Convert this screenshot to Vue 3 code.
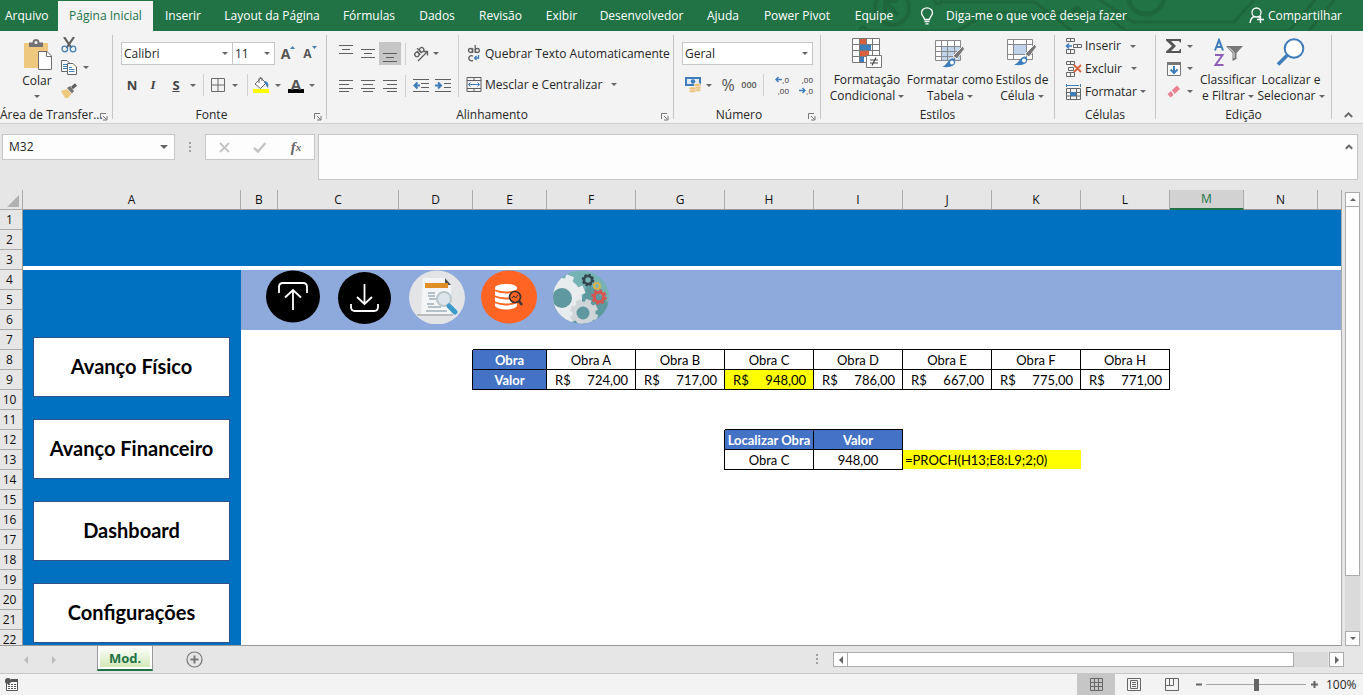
<script setup>
import { ref } from 'vue'

const tabs = ['Arquivo', 'Página Inicial', 'Inserir', 'Layout da Página', 'Fórmulas', 'Dados', 'Revisão', 'Exibir', 'Desenvolvedor', 'Ajuda', 'Power Pivot', 'Equipe']
const activeTab = ref('Página Inicial')
const zoom = ref(50)
const formula = ref('')
const nameBox = ref('M32')

const columns = ['A', 'B', 'C', 'D', 'E', 'F', 'G', 'H', 'I', 'J', 'K', 'L', 'M', 'N', '']
const rows = Array.from({ length: 22 }, (_, i) => i + 1)

const cells = {
  E8: { text: 'Obra', kind: 'head' },
  E9: { text: 'Valor', kind: 'head' },
  H12: { text: 'Localizar Obra', kind: 'head' },
  I12: { text: 'Valor', kind: 'head' },
  H13: { text: 'Obra C' },
  I13: { text: '948,00' },
  J13: { text: '=PROCH(H13;E8:L9;2;0)', kind: 'note', span: 2 },
}
const works = [['F', 'Obra A', '724,00'], ['G', 'Obra B', '717,00'], ['H', 'Obra C', '948,00'], ['I', 'Obra D', '786,00'], ['J', 'Obra E', '667,00'], ['K', 'Obra F', '775,00'], ['L', 'Obra H', '771,00']]
for (const [col, name, value] of works) {
  cells[col + 8] = { text: name }
  cells[col + 9] = { money: value, kind: col === 'H' ? 'found' : '' }
}

const ranges = [{ c0: 4, c1: 11, r0: 8, r1: 9 }, { c0: 7, c1: 8, r0: 12, r1: 13 }]
const boxed = (c, r) => ranges.some(g => c >= g.c0 && c <= g.c1 && r >= g.r0 && r <= g.r1)

function rowCells(r) {
  const out = []
  for (let c = 0; c < columns.length; c++) {
    const data = cells[columns[c] + r] || {}
    const cls = [data.kind]
    if (boxed(c, r) || boxed(c + 1, r)) cls.push('line-right')
    if (boxed(c, r) || boxed(c, r + 1)) cls.push('line-bottom')
    if (r <= 3 || c === 0) cls.push('blue')
    else if (r <= 6) cls.push('band')
    if (r === 3) cls.push('ruled')
    out.push({ ...data, id: columns[c] + r, cls })
    if (data.span) c += data.span - 1
  }
  return out
}

const shapes = ['Avanço Físico', 'Avanço Financeiro', 'Dashboard', 'Configurações']

const teeth = [0, 45, 90, 135, 180, 225, 270, 315]
const topLines = ['M0 1.5H14M3 5.5H11M0 9.5H14', 'M0 1.5H14M3 5.5H11M0 9.5H14', 'M0 1.5H14M3 5.5H11M0 9.5H14']
const alignLines = ['M0 1.5H14M0 5.5H10M0 9.5H14M0 12.5H10', 'M0 1.5H14M2 5.5H12M0 9.5H14M2 12.5H12', 'M0 1.5H14M4 5.5H14M0 9.5H14M4 12.5H14']
</script>

<template>
  <div class="app">
    <header class="titlebar">
      <svg class="art" width="583" height="31" viewBox="0 0 583 31" fill="none" stroke="#1e673d" stroke-width="3">
        <circle cx="112" cy="8" r="17" stroke-width="4" />
        <path d="M105 14V1H118M105 1L118 15" stroke-width="4" />
        <circle cx="83" cy="30" r="3" /><path d="M86 30.500H178L208 13H323L346 31H509L535 0" />
        <circle cx="158" cy="1" r="3" /><path d="M161 2H255L292 31" />
        <path d="M320 0L353 22H454L474 0" />
        <circle cx="297" cy="10" r="3" fill="#1e673d" />
        <circle cx="366" cy="-4" r="18" stroke-width="5" />
        <path d="M529 31L554 0" />
      </svg>
      <nav class="tabs">
        <button v-for="t in tabs" :key="t" :class="{ active: t === activeTab }" @click="activeTab = t">{{ t }}</button>
      </nav>
      <label class="tellme">
        <svg width="14" height="18" viewBox="0 0 14 18" fill="none" stroke="#fff" stroke-width="1.3"><path d="M4.5 12.5C4.500 10 1.500 9 1.500 5.800A5.500 5 0 0 1 12.500 5.800C12.500 9 9.500 10 9.500 12.500ZM4.500 14.500H9.500M5.500 16.800H8.500" /></svg>
        <input placeholder="Diga-me o que você deseja fazer">
      </label>
      <button class="share">
        <svg width="16" height="17" viewBox="0 0 16 17" fill="none" stroke="#fff" stroke-width="1.3"><circle cx="7.500" cy="5.500" r="4.500" /><path d="M1 16C1.500 12 3.500 10 5.500 9.500M9 9.500L11 11M11.500 9V16M8 12.500H15" /></svg>
        Compartilhar
      </button>
    </header>

    <section class="ribbon">
      <div class="group">
        <div class="body clip">
          <button class="big">
            <svg width="30" height="32" viewBox="-1 -1 30 32"><path d="M1 4H25V29H1Z" fill="#edc87e" /><path d="M6 3.500H9.500A3.500 3.500 0 0 1 16.500 3.500H20V8H6Z" fill="#737373" /><circle cx="13" cy="3.500" r="1.500" fill="#f3f3f3" /><path d="M15.500 12.500H24L28.500 17V30.500H15.500Z" fill="#fff" stroke="#6d6d6d" /><path d="M23.500 12.500V17.500H28.500" fill="none" stroke="#6d6d6d" /></svg>
            <span>Colar</span><i class="caret"></i>
          </button>
          <div class="stack">
            <button aria-label="Recortar"><svg width="16" height="16" viewBox="0 0 16 16" fill="none"><path d="M3 0L10.500 11M13 0L5.500 11" stroke="#5f5f5f" stroke-width="2.200" /><circle cx="3.800" cy="12" r="2.800" stroke="#4680b8" stroke-width="1.300" /><circle cx="12" cy="12" r="2.800" stroke="#4680b8" stroke-width="1.300" /></svg></button>
            <button aria-label="Copiar"><svg width="16" height="16" viewBox="0 0 16 16" fill="#fff" stroke="#666"><path d="M.5 1.500H6L8.500 4V12.500H.5Z" /><path d="M2 5.500H6M2 7.500H6M2 9.500H6" stroke="#4680b8" /><path d="M6.500 4.500H12L15.500 8V15.500H6.500Z" /><path d="M8 8.500H11M8 10.500H13.500M8 12.500H13.500" stroke="#4680b8" /></svg><i class="caret"></i></button>
            <button aria-label="Pincel de Formatação"><svg width="17" height="16" viewBox="0 0 17 16"><path d="M0 8L6 6L10.500 11L7 15H4Z" fill="#edc87e" /><path d="M6 5L9 3L13 8L11 10.500Z" fill="#737373" /><path d="M11 5L15 1.500" stroke="#5f5f5f" stroke-width="3" /></svg></button>
          </div>
        </div>
        <div class="label start">Área de Transfer...<svg class="launch" viewBox="0 0 8 8"><path d="M.5 6V.5H6M3 3L6.500 6.500M7 3V7H3" /></svg></div>
      </div>

      <div class="group">
        <div class="body two">
          <div class="row">
            <div class="pick font"><select aria-label="Fonte"><option>Calibri</option></select><i class="caret"></i></div>
            <div class="pick size"><select aria-label="Tamanho"><option>11</option></select><i class="caret"></i></div>
            <button class="grow" aria-label="Aumentar fonte"><b>A</b><svg width="5" height="3" viewBox="0 0 5 3"><path d="M0 3L2.500 0L5 3Z" fill="#4680b8" /></svg></button>
            <button class="grow small" aria-label="Diminuir fonte"><b>A</b><svg width="5" height="3" viewBox="0 0 5 3"><path d="M0 0L2.500 3L5 0Z" fill="#4680b8" /></svg></button>
          </div>
          <div class="row fmt">
            <button><b>N</b></button>
            <button><b class="it">I</b></button>
            <button><b class="un">S</b></button>
            <i class="caret"></i>
            <hr>
            <button aria-label="Bordas"><svg width="14" height="14" viewBox="0 0 14 14" fill="none" stroke="#6a6a6a"><path d="M.5 .5H13.500V13.500H.5ZM7 .5V13.500M.5 7H13.500" /></svg></button>
            <i class="caret"></i>
            <hr>
            <button aria-label="Cor de preenchimento"><svg width="17" height="16" viewBox="0 0 17 16"><path d="M2 7L8 1L13 6L7.500 11.500Z" fill="#fff" stroke="#666" /><path d="M6 6V1.500A1.700 1.700 0 0 1 9 1.500V4" fill="none" stroke="#666" /><path d="M12 4C15 5 16 7 15 11C13 9 13 7 10.500 5Z" fill="#4680b8" /><path d="M0 12H16V16H0Z" fill="#ff0" /></svg></button>
            <i class="caret"></i>
            <button class="color" aria-label="Cor da fonte"><b>A</b></button>
            <i class="caret"></i>
          </div>
        </div>
        <div class="label side">Fonte<svg class="launch" viewBox="0 0 8 8"><path d="M.5 6V.5H6M3 3L6.500 6.500M7 3V7H3" /></svg></div>
      </div>

      <div class="group">
        <div class="body align">
          <div class="two">
            <div class="row al">
              <button v-for="(d, i) in topLines" :key="i" :class="['v' + i, { on: i === 2 }]" :aria-label="'Alinhamento vertical ' + i"><svg width="14" height="11" viewBox="0 0 14 11" stroke="#5f5f5f"><path :d="d" /></svg></button>
              <hr>
              <button aria-label="Orientação"><svg width="18" height="17" viewBox="0 0 18 17" fill="none" stroke="#5f5f5f" stroke-width="1.300"><path d="M6 16L15 7M11.500 6.500H15.500V10.500" /><g transform="rotate(-45 6 7)"><circle cx="3.500" cy="8" r="2.200" /><path d="M5.800 5.500V10.500M8 3.500V10.500" /><circle cx="10.200" cy="8" r="2.200" /></g></svg></button>
              <i class="caret"></i>
            </div>
            <div class="row al">
              <button v-for="(d, i) in alignLines" :key="i" :aria-label="'Alinhamento horizontal ' + i"><svg width="14" height="13" viewBox="0 0 14 13" stroke="#5f5f5f"><path :d="d" /></svg></button>
              <hr>
              <button aria-label="Diminuir recuo"><svg width="16" height="14" viewBox="0 0 16 14" fill="none" stroke="#5f5f5f"><path d="M0 .5H16M8 4.500H16M8 8.500H16M0 12.500H16" /><path d="M7 6.500H2M4.500 3.500L1.500 6.500L4.500 9.500" stroke="#3f7cba" stroke-width="2" /></svg></button>
              <button aria-label="Aumentar recuo"><svg width="16" height="14" viewBox="0 0 16 14" fill="none" stroke="#5f5f5f"><path d="M0 .5H16M9 4.500H16M9 8.500H16M0 12.500H16" /><path d="M0 6.500H5M3 3.500L6 6.500L3 9.500" stroke="#3f7cba" stroke-width="2" /></svg></button>
            </div>
          </div>
          <div class="two wide">
            <button class="row cmd"><svg width="16" height="17" viewBox="0 0 16 17" fill="none" stroke="#5f5f5f" stroke-width="1.300"><circle cx="4.500" cy="5.500" r="2" /><path d="M6.700 3.200V8M9.200 0V8M7 11.300A2.500 2.500 0 1 0 7 15.200" /><circle cx="11.300" cy="5.500" r="2" /><path d="M12.500 10V13H8.500M10.500 11L8.500 13L10.500 15" stroke="#3f7cba" /></svg>Quebrar Texto Automaticamente</button>
            <button class="row cmd"><svg width="15" height="15" viewBox="0 0 15 15" fill="none" stroke="#5f5f5f"><path d="M.5 .5H14.500V14.500H.5ZM.5 3.500H14.500M.5 11.500H14.500M7.500 .5V3.500M7.500 11.500V14.500" /><path d="M2 7.500H13M4 5.500L2 7.500L4 9.500M11 5.500L13 7.500L11 9.500" stroke="#3f7cba" /></svg>Mesclar e Centralizar<i class="caret far"></i></button>
          </div>
        </div>
        <div class="label side">Alinhamento<svg class="launch" viewBox="0 0 8 8"><path d="M.5 6V.5H6M3 3L6.500 6.500M7 3V7H3" /></svg></div>
      </div>

      <div class="group">
        <div class="body two">
          <div class="row"><div class="pick num"><select aria-label="Formato de número"><option>Geral</option></select><i class="caret"></i></div></div>
          <div class="row numfmt">
            <button aria-label="Formato de contabilização"><svg width="17" height="16" viewBox="0 0 17 16"><path d="M0 0H16V9H0Z" fill="#3f7cba" /><path d="M2 2H14V7H2Z" fill="#e4edf6" /><circle cx="8" cy="4.500" r="2.200" fill="#3f7cba" /><g fill="#edc27a" stroke="#f3f3f3" stroke-width=".6"><ellipse cx="12.500" cy="13" rx="3.500" ry="1.700" /><ellipse cx="12.500" cy="10.500" rx="3.500" ry="1.700" /><ellipse cx="12.500" cy="8" rx="3.500" ry="1.700" /><ellipse cx="7.500" cy="14" rx="3.500" ry="1.700" /><ellipse cx="7.500" cy="11.500" rx="3.500" ry="1.700" /></g></svg></button>
            <i class="caret"></i>
            <button class="pct">%</button>
            <button class="tiny">000</button>
            <hr>
            <button class="dec" aria-label="Aumentar casas decimais"><span><svg width="7" height="7" viewBox="0 0 7 7" fill="none" stroke="#3f7cba" stroke-width="1.400"><path d="M7 3.500H1M3.500 1L1 3.500L3.500 6" /></svg>,0</span><span>,00</span></button>
            <button class="dec" aria-label="Diminuir casas decimais"><span>,00</span><span><svg width="7" height="7" viewBox="0 0 7 7" fill="none" stroke="#3f7cba" stroke-width="1.400"><path d="M0 3.500H6M3.500 1L6 3.500L3.500 6" /></svg>,0</span></button>
          </div>
        </div>
        <div class="label side">Número<svg class="launch" viewBox="0 0 8 8"><path d="M.5 6V.5H6M3 3L6.500 6.500M7 3V7H3" /></svg></div>
      </div>

      <div class="group">
        <div class="body styles">
          <button class="big">
            <svg width="30" height="31" viewBox="0 0 30 31"><path d="M.5 .5H27.500V24.500H.5Z" fill="#fff" /><path d="M8 1H14V6H8ZM8 13H17V18H8Z" fill="#d9603f" /><path d="M8 7H19V12H8ZM8 19H12V24H8Z" fill="#3f7cba" /><path d="M.5 .5H27.500V24.500H.5ZM.5 6.500H27.500M.5 12.500H27.500M.5 18.500H27.500M7.500 .5V24.500M14.500 .5V6M20.500 .5V18" fill="none" stroke="#777" /><path d="M14.500 17.500H29.500V29.500H14.500Z" fill="#fff" stroke="#777" /><path d="M18 22H26M18 25H26M24 19.500L20 27.500" stroke="#444" stroke-width="1.200" /></svg>
            <span>Formatação</span><span>Condicional<i class="caret"></i></span>
          </button>
          <button class="big">
            <svg width="30" height="31" viewBox="0 0 30 31"><path d="M.5 3.500H25.500V22.500H.5Z" fill="#fff" /><path d="M7 9H25V22H7Z" fill="#bfd3ea" /><path d="M.5 2.500H25.500V22.500H.5ZM.5 8.500H25.500M.5 13.500H25.500M.5 18.500H25.500M6.500 2.500V22.500M12.500 2.500V22.500M19.500 2.500V22.500" fill="none" stroke="#888" /><path d="M28 8L29.500 11L22 21L18 18Z" fill="#777" stroke="#f3f3f3" /><path d="M16 21C19 19 22 23 19 27C15 30 10 29 7 29C12 27 12 23 16 21Z" fill="#3f7cba" /><circle cx="17" cy="24.500" r="2" fill="#fff" /></svg>
            <span>Formatar como</span><span>Tabela<i class="caret"></i></span>
          </button>
          <button class="big">
            <svg width="30" height="31" viewBox="0 0 30 31"><path d="M.5 1.500H25.500V21.500H.5Z" fill="#fff" /><path d="M6 7H20V17H6Z" fill="#bfd3ea" /><path d="M.5 1.500H25.500V21.500H.5ZM.5 6.500H25.500M.5 16.500H25.500M6.500 1.500V21.500M19.500 1.500V21.500" fill="none" stroke="#888" /><path d="M28 6L29.500 9L22 19L18 16Z" fill="#777" stroke="#f3f3f3" /><path d="M16 19C19 17 22 21 19 25C15 28 10 27 7 27C12 25 12 21 16 19Z" fill="#3f7cba" /><circle cx="17" cy="22.500" r="2" fill="#fff" /></svg>
            <span>Estilos de</span><span>Célula<i class="caret"></i></span>
          </button>
        </div>
        <div class="label">Estilos</div>
      </div>

      <div class="group">
        <div class="body list">
          <button><svg width="17" height="16" viewBox="0 0 17 16" fill="none" stroke="#666"><path d="M1.500 .5H9.500V3.500H1.500ZM5.500 .5V3.500M1.500 11.500H9.500V15.500H1.500ZM5.500 11.500V15.500M8.500 6.500H16.500V9.500H8.500ZM12.500 6.500V9.500" /><path d="M7 8H2M4 5.500L1.500 8L4 10.500" stroke="#3f7cba" stroke-width="1.600" /></svg>Inserir<i class="caret"></i></button>
          <button><svg width="17" height="16" viewBox="0 0 17 16" fill="none" stroke="#666"><path d="M1.500 .5H9.500V3.500H1.500ZM5.500 .5V3.500M1.500 11.500H9.500V15.500H1.500ZM5.500 11.500V15.500M3.500 6.500H8.500V9.500H3.500Z" /><path d="M9 4L16 11M16 4L9 11" stroke="#d9603f" stroke-width="1.800" /></svg>Excluir<i class="caret"></i></button>
          <button><svg width="17" height="16" viewBox="0 0 17 16" fill="none" stroke="#666"><path d="M1.500 4.500H15.500V15.500H1.500ZM1.500 8.500H15.500M1.500 12H15.500M5.500 4.500V15.500M11.500 4.500V15.500" /><path d="M5 8H11V12H5Z" fill="#3f7cba" stroke="none" /><path d="M1.500 0V3M15.500 0V3M2 1.500H14" stroke="#3f7cba" /></svg>Formatar<i class="caret near"></i></button>
        </div>
        <div class="label">Células</div>
      </div>

      <div class="group">
        <div class="body edit">
          <div class="list">
            <button aria-label="AutoSoma"><svg width="16" height="16" viewBox="0 0 16 16"><path d="M0 1H15V4.500H14L13 3H5L10 8L5 13H13L14 11H15V15H0V13.500L6 8L0 2.500Z" fill="#555" /></svg><i class="caret"></i></button>
            <button aria-label="Preencher"><svg width="16" height="16" viewBox="0 0 16 16"><path d="M1.500 1.500H14.500V14.500H1.500Z" fill="#fff" stroke="#777" /><path d="M1 1H15V4H1Z" fill="#777" /><path d="M8 5V12M4.500 8.500L8 12L11.500 8.500" fill="none" stroke="#3f7cba" stroke-width="2" /></svg><i class="caret"></i></button>
            <button aria-label="Limpar"><svg width="16" height="16" viewBox="0 0 16 16"><path d="M6 6L11 1.500L14 5L8.500 10Z" fill="#ea8090" /><path d="M5 7L7.500 11L4.500 13.500L1.500 10Z" fill="#ea8090" /></svg><i class="caret"></i></button>
          </div>
          <button class="big">
            <svg width="31" height="31" viewBox="0 0 31 31" fill="none"><path d="M2 12.500L6 2L10 12.500M3.500 9H8.500" stroke="#3f7cba" stroke-width="2" /><path d="M2 17H9.500L2.500 27H10.500" stroke="#8d5fb4" stroke-width="2" /><path d="M13 8H30L23.500 15V21L19.500 23V15Z" fill="#777" /><path d="M16 9.500L21 14.500V20" stroke="#f3f3f3" /></svg>
            <span>Classificar</span><span>e Filtrar<i class="caret"></i></span>
          </button>
          <button class="big">
            <svg width="31" height="31" viewBox="0 0 31 31" fill="none" stroke="#3f7cba"><circle cx="18" cy="10.500" r="9.300" fill="#fff" stroke-width="2" /><path d="M11 17.500L2 26.500" stroke-width="3.600" /></svg>
            <span>Localizar e</span><span>Selecionar<i class="caret"></i></span>
          </button>
        </div>
        <div class="label">Edição</div>
      </div>
      <button class="collapse" aria-label="Recolher"><svg width="9" height="6" viewBox="0 0 9 6" fill="none" stroke="#666" stroke-width="1.800"><path d="M.8 5L4.500 1.300L8.200 5" /></svg></button>
    </section>

    <section class="formulabar">
      <label class="namebox"><input v-model="nameBox" aria-label="Caixa de nome"><i class="caret"></i></label>
      <svg class="dots" width="3" height="12" viewBox="0 0 3 12" fill="#a0a0a0"><path d="M0 0H2V2H0ZM0 4H2V6H0ZM0 8H2V10H0Z" /></svg>
      <div class="fx">
        <button aria-label="Cancelar"><svg width="11" height="11" viewBox="0 0 11 11" stroke="#c4c4c4" stroke-width="1.800"><path d="M1 1L10 10M10 1L1 10" /></svg></button>
        <button aria-label="Inserir"><svg width="14" height="11" viewBox="0 0 14 11" fill="none" stroke="#c4c4c4" stroke-width="2.400"><path d="M1 6L5 9.500L12.500 1" /></svg></button>
        <button class="fn">f<small>x</small></button>
      </div>
      <label class="formula"><textarea v-model="formula" aria-label="Barra de fórmulas"></textarea><svg width="8" height="6" viewBox="0 0 8 6" fill="none" stroke="#666" stroke-width="2"><path d="M.8 4.800L4 1.600L7.200 4.800" /></svg></label>
    </section>

    <main class="work">
      <div class="sheet">
        <table>
          <colgroup>
            <col class="c-row"><col v-for="c in columns" :key="c" :class="'c-' + c">
          </colgroup>
          <thead>
            <tr>
              <th class="corner"><svg width="12" height="12" viewBox="0 0 12 12"><path d="M12 0V12H0Z" fill="#b1b1b1" /></svg></th>
              <th v-for="c in columns" :key="c" :class="{ sel: c === 'M', last: !c }">{{ c }}</th>
            </tr>
          </thead>
          <tbody>
            <tr v-for="r in rows" :key="r">
              <th>{{ r }}</th>
              <td v-for="cell in rowCells(r)" :key="cell.id" :class="cell.cls" :colspan="cell.span">
                <div v-if="cell.money" class="money"><span>R$</span><span>{{ cell.money }}</span></div>
                <template v-else>{{ cell.text }}</template>
              </td>
            </tr>
          </tbody>
        </table>

        <div class="shapes"><button v-for="s in shapes" :key="s">{{ s }}</button></div>

        <div class="icons">
          <svg viewBox="0 0 56 54"><ellipse cx="28" cy="26.500" rx="27" ry="26" /><path d="M14 23V17Q14 13 18 13H38Q42 13 42 17V23M28 40V20M20 27.500L28 20L36 27.500" fill="none" stroke="#fff" stroke-width="1.800" /></svg>
          <svg viewBox="0 0 56 54"><ellipse cx="27.500" cy="28" rx="26.500" ry="26" /><path d="M14 34V37Q14 41 18 41H37Q41 41 41 37V34M27.500 14V34M20 27L27.500 34L35 27" fill="none" stroke="#fff" stroke-width="1.800" /></svg>
          <svg viewBox="0 0 56 54"><ellipse cx="28" cy="27.500" rx="28" ry="27" fill="#e3e4e6" /><path d="M8 44H44V46H8Z" fill="#bbb" /><path d="M14 8H36L42 14V44H12Z" fill="#f4f5f6" /><path d="M36 8L42 15H36Z" fill="#4d4d55" /><path d="M16 13H39V18H16Z" fill="#e08e25" /><path d="M19 23H26M19 26H26M20 29H31M18 34H25M19 37H32M17 41H38" stroke="#9fb0bb" stroke-width="1.500" /><circle cx="35" cy="29" r="7" fill="#dce6eb" stroke="#bac6cc" stroke-width="2" /><path d="M40 36L46 42" stroke="#3a9bcb" stroke-width="5" stroke-linecap="round" /></svg>
          <svg viewBox="0 0 56 54"><ellipse cx="28" cy="27" rx="28" ry="26.500" fill="#ff6422" /><path d="M14 17.500A11 3.500 0 0 1 36 17.500V35.500A11 4 0 0 1 14 35.500Z" fill="#fff" /><path d="M13 20Q25 25 37 20M13 26Q25 31 37 26M13 32Q25 37 37 32" fill="none" stroke="#ff6422" stroke-width="1.800" /><circle cx="34" cy="27" r="5.500" fill="#ff6422" stroke="#3c3430" stroke-width="1.700" /><path d="M38 31L41 35" stroke="#3c3430" stroke-width="2.500" /><path d="M31 28L33 26L34.500 28L37 25" fill="none" stroke="#3c3430" /></svg>
          <svg viewBox="0 0 56 54">
            <clipPath id="gearclip"><ellipse cx="28" cy="27" rx="28" ry="26.500" /></clipPath>
            <g clip-path="url(#gearclip)">
              <path d="M0 0H56V54H0Z" fill="#76b3b5" /><path d="M35 12L56 34V54H20Z" fill="#5d999f" />
              <g fill="#e9ecee"><circle cx="8" cy="29" r="21" /><rect v-for="a in teeth" :key="a" x="4" y="4" width="8" height="8" :transform="`rotate(${a + 22} 8 29)`" /></g>
              <circle cx="9" cy="28" r="10" fill="#5f999f" />
              <g fill="#cfd5d9"><circle cx="31" cy="43" r="11.500" /><rect v-for="a in teeth" :key="a" x="28" y="29" width="6" height="6" :transform="`rotate(${a + 20} 31 43)`" /></g>
              <circle cx="30" cy="43" r="6.500" fill="#5f999f" />
              <g stroke="#33444e" fill="none"><circle cx="35" cy="10" r="4" stroke-width="2.500" /><circle cx="35" cy="10" r="5.500" stroke-dasharray="2.300 2" stroke-width="1.600" /></g>
              <g stroke="#e2b340" fill="none"><circle cx="44" cy="16" r="2.700" stroke-width="1.600" /><circle cx="44" cy="16" r="3.800" stroke-dasharray="1.500 1.500" /></g>
              <g stroke="#d9534f" fill="none"><circle cx="46" cy="27" r="4.700" stroke-width="3" /><circle cx="46" cy="27" r="7" stroke-dasharray="3 2.500" stroke-width="1.600" /></g>
            </g>
          </svg>
        </div>
      </div>
      <div class="vscroll">
        <button aria-label="Rolar para cima"><i class="caret up"></i></button>
        <div class="track"><div class="thumb"></div></div>
        <button aria-label="Rolar para baixo"><i class="caret"></i></button>
      </div>
    </main>

    <section class="sheetbar">
      <div class="navs"><i class="tri left"></i><i class="tri right"></i></div>
      <button class="sheettab"><span>Mod.</span></button>
      <button class="add" aria-label="Nova planilha"><svg width="17" height="17" viewBox="0 0 17 17" fill="none" stroke="#777"><circle cx="8.500" cy="8.500" r="7.500" stroke-width="1.200" /><path d="M8.500 4.500V12.500M4.500 8.500H12.500" stroke-width="2" /></svg></button>
      <svg class="dots" width="3" height="12" viewBox="0 0 3 12" fill="#a0a0a0"><path d="M0 0H2V2H0ZM0 4H2V6H0ZM0 8H2V10H0Z" /></svg>
      <div class="hscroll">
        <button aria-label="Rolar para a esquerda"><i class="tri left dark"></i></button>
        <div class="track"><div class="thumb"></div></div>
        <button aria-label="Rolar para a direita"><i class="tri right dark"></i></button>
      </div>
    </section>

    <footer class="status">
      <button class="rec" aria-label="Gravar macro"><svg width="14" height="14" viewBox="0 0 14 14"><path d="M1.500 5V12.500H12.500V1.500H6" fill="#fff" stroke="#555" /><path d="M6 1H13V4H6Z" fill="#555" /><circle cx="3" cy="3" r="3" fill="#555" /><path d="M3 6.500H11M3 8.500H11M3 10.500H11" stroke="#555" stroke-dasharray="2 1" /></svg></button>
      <button class="view on" aria-label="Normal"><svg width="13" height="13" viewBox="0 0 13 13" fill="none" stroke="#666"><path d="M.5 .5H12.500V12.500H.5ZM4.500 .5V12.500M8.500 .5V12.500M.5 4.500H12.500M.5 8.500H12.500" /></svg></button>
      <button class="view" aria-label="Layout da Página"><svg width="14" height="13" viewBox="0 0 14 13" fill="none" stroke="#666"><path d="M.5 .5H13.500V12.500H.5ZM3.500 2.500H10.500V10.500H3.500ZM5 4.500H9M5 6.500H9M5 8.500H9" /></svg></button>
      <button class="view" aria-label="Quebra de página"><svg width="14" height="13" viewBox="0 0 14 13" fill="none" stroke="#666"><path d="M.5 .5H13.500V12.500H.5ZM.5 7.500H8.500V.5M4.500 .5V7.500" /></svg></button>
      <button class="zoombtn" aria-label="Reduzir"><svg width="7" height="7" viewBox="0 0 7 7"><path d="M0 2.500H6V4.500H0Z" fill="#666" /></svg></button>
      <input v-model="zoom" type="range" min="0" max="100" aria-label="Zoom">
      <button class="zoombtn" aria-label="Ampliar"><svg width="7" height="7" viewBox="0 0 7 7"><path d="M0 2.500H2.500V0H4.500V2.500H7V4.500H4.500V7H2.500V4.500H0Z" fill="#666" /></svg></button>
      <span class="pctval">100%</span>
    </footer>
  </div>
</template>

<style>
body { background: #e6e6e6; }
</style>

<style scoped>
* { box-sizing: border-box; }
.app { height: 100vh; min-height: 420px; display: flex; flex-direction: column; overflow: hidden; background: #e6e6e6; color: #262626; font: 12px/16px "Open Sans", "Noto Sans", sans-serif; }
button, input, select, textarea { font: inherit; color: inherit; margin: 0; padding: 0; border: 0; background: none; border-radius: 0; outline: 0; }
button { display: flex; align-items: center; justify-content: center; white-space: nowrap; }
svg { display: block; flex: none; }
hr { width: 1px; height: 22px; margin: 0 auto; border: 0; background: #d0d0d0; }
.caret { display: inline-block; flex: none; width: 6px; height: 3px; border: 3px solid transparent; border-top-color: #666; border-bottom: 0; place-self: center; }
.caret.up { border-top: 0; border-bottom: 3px solid #666; }

.titlebar { position: relative; display: flex; height: 31px; flex: none; background: #217346; color: #fff; }
.art { position: absolute; right: 0; top: 0; }
.tabs { position: relative; display: grid; grid-template-columns: 58px 95px 60px 118px 76px 60px 67px 55px 105px 58px 90px 64px; padding-top: 1px; }
.tabs button:first-child { justify-content: flex-start; padding-left: 5px; }
.tabs .active { background: #f3f3f3; color: #217346; }
.tellme { position: relative; flex: 1; display: flex; align-items: center; gap: 12px; padding-left: 14px; }
.tellme input { flex: 1; }
.tellme input::placeholder { color: #fff; opacity: 1; }
.share { position: relative; gap: 3px; padding-right: 21px; }

.ribbon { flex: none; display: grid; grid-template-columns: 113px 214px 347px 147px 234px 101px 176px 1fr; padding: 4px 0; background: #f3f3f3; border-bottom: 1px solid #d0d0d0; }
.group { border-right: 1px solid #c4c4c4; min-width: 0; }
.body { height: 72px; }
.label { position: relative; height: 12px; line-height: 16px; text-align: center; white-space: nowrap; }
.label.start { text-align: left; }
.label.side { padding-right: 16px; }
.launch { position: absolute; right: 4px; top: 6px; width: 8px; height: 8px; fill: none; stroke: #777; }
.clip { display: grid; grid-template-columns: 60px 1fr; padding-left: 7px; }
.big { flex-direction: column; justify-content: flex-start; padding-top: 3px; }
.big svg { margin-bottom: 3px; }
.big .caret { margin-left: 3px; vertical-align: middle; }
.clip .big .caret { margin: 6px 0 0; }
.stack { display: grid; grid-template-rows: 20px 24px 23px; margin-left: -6px; }
.stack button { justify-content: flex-start; gap: 6px; }
.two { display: grid; grid-template-rows: 23px 21px; row-gap: 9px; padding: 7px 7px 0 8px; align-content: start; }
.row { display: flex; align-items: center; }
.pick { display: grid; height: 23px; background: #fff; border: 1px solid #c6c6c6; }
.pick > * { grid-area: 1 / 1; }
.pick select { appearance: none; padding-left: 2px; width: 100%; }
.pick .caret { justify-self: end; margin-right: 4px; pointer-events: none; }
.font { width: 112px; }
.size { width: 43px; margin-left: -1px; }
.num { flex: 1; }
.grow { width: 22px; align-items: flex-start; color: #555; }
.grow b { font-size: 14px; line-height: 23px; }
.grow.small b { font-size: 12px; }
.grow svg { margin-top: 4px; }
.size + .grow { margin-left: 2px; }
.fmt { display: grid; grid-template-columns: 22px 20px 26px 7px 14px 16px 18px 6px 22px 12px 24px 8px; }
.fmt b { font-size: 13px; color: #444; }
.it { font-family: "Liberation Serif", serif; font-style: italic; }
.un { text-decoration: underline; }
.fmt .color b { width: 16px; height: 16px; line-height: 14px; font-size: 15px; text-align: center; border-bottom: 4px solid #000; color: #555; }
.align { display: grid; grid-template-columns: 131px 1fr; }
.align .two { padding-right: 0; }
.al { display: grid; grid-template-columns: 22px 22px 22px 8px 24px 20px; }
.al button { height: 23px; }
.al .caret { justify-self: start; }
.v0 { padding-bottom: 8px; }
.v2 { padding-top: 8px; }
.on { background: #c6c6c6; }
.align .wide { padding-left: 7px; border-left: 1px solid #d0d0d0; height: 62px; }
.cmd { justify-content: flex-start; }
.cmd svg { width: 16px; margin-right: 3px; }
.far { margin-left: 9px; }
.numfmt { display: grid; grid-template-columns: 22px 10px 28px 14px 15px 18px 24px; }
.pct { font-size: 16px; color: #555; }
.tiny { font-size: 9px; font-weight: 600; color: #555; }
.dec { flex-direction: column; align-items: flex-end; font-size: 8px; line-height: 11px; color: #333; }
.dec span { display: flex; align-items: center; }
.styles { display: grid; grid-template-columns: 82px 84px 60px; padding-left: 5px; }
.list { display: grid; grid-template-rows: 22px 23px 23px; align-content: start; }
.list button { justify-content: flex-start; padding-left: 10px; gap: 3px; }
.list .caret { margin-left: 6px; }
.list .near { margin-left: 0; }
.edit { display: grid; grid-template-columns: 42px 60px 66px; }
.edit .list .caret { margin-left: 2px; }
.collapse { align-self: end; padding: 0 0 1px 12px; justify-content: flex-start; }

.formulabar { flex: none; display: flex; align-items: flex-start; padding: 10px 5px 10px 2px; height: 66px; }
.namebox, .fx, .formula { display: flex; align-items: center; background: #fdfdfd; border: 1px solid #c6c6c6; height: 26px; }
.namebox { width: 173px; padding: 0 6px; }
.namebox input { flex: 1; min-width: 0; }
.namebox .caret { border-width: 4px 4px 0; width: 8px; height: 4px; }
.formulabar .dots { margin: 8px 13px 0 14px; }
.fx { width: 110px; display: grid; grid-template-columns: 1fr 1fr 1fr; }
.fn { font: italic bold 15px/18px "Liberation Serif", serif; color: #666; }
.fn small { font-size: 11px; align-self: end; }
.formula { flex: 1; height: 46px; margin-left: 3px; align-items: flex-start; padding: 0 4px; }
.formula textarea { flex: 1; height: 44px; resize: none; padding-top: 4px; }
.formula svg { margin-top: 9px; }

.work { flex: 1; min-height: 0; display: flex; }
.sheet { flex: 1; position: relative; overflow: hidden; background: linear-gradient(#e6e6e6 20px, #fff 20px); border-right: 1px solid #ababab; border-bottom: 1px solid #999; }
table { width: 100%; table-layout: fixed; border-collapse: separate; border-spacing: 0; }
.c-row { width: 23px; }
.c-A { width: 218px; }
.c-B { width: 37px; }
.c-C { width: 121px; }
.c-D, .c-E, .c-M, .c-N { width: 74px; }
.c-F, .c-G, .c-H, .c-I, .c-J, .c-K, .c-L { width: 89px; }
th, td { height: 20px; padding: 0; text-align: center; white-space: nowrap; line-height: 18px; overflow: hidden; }
th { font-weight: 400; font-size: 12px; background: #e6e6e6; color: #111; border-right: 1px solid #ababab; border-bottom: 1px solid #ababab; }
tbody th { padding: 1px 3px 0 0; border-right-color: #999; }
thead th { border-bottom-color: #999; }
.corner { border-bottom-color: #ababab; }
.corner svg { margin: 2px 0 0 7px; }
.last { border-right: 0; }
.sel { background: #d2d2d2; color: #217346; border-bottom: 2px solid #217346; }
td { padding: 0 1px 1px 0; font: 13px/18px Lato, sans-serif; color: #000; }
.blue { background: #0070c0; }
.band { background: #8ea9db; }
.ruled { border-bottom: 4px solid #fff; }
.line-right { box-shadow: inset -1px 0 #000; }
.line-bottom { box-shadow: inset 0 -1px #000; }
.line-right.line-bottom { box-shadow: inset -1px -1px #000; }
.head { background: #4472c4; color: #fff; font-weight: 700; }
.found { background: #ff0; }
.note { background: linear-gradient(#ff0, #ff0) 0 0 / 100% 19px no-repeat; text-align: left; padding-left: 2px; }
.money { display: flex; justify-content: space-between; padding: 0 7px 0 8px; }

.shapes { position: absolute; left: 33px; top: 147px; width: 197px; display: grid; gap: 22px; }
.shapes button { height: 60px; padding-bottom: 3px; background: #fff; border: 1px solid #2f528f; color: #000; font: 700 20px/24px Lato, sans-serif; }
.icons { position: absolute; left: 265px; top: 80px; display: flex; gap: 16px; }
.icons svg { width: 56px; height: 54px; }

.vscroll { width: 21px; display: flex; flex-direction: column; padding: 2px 3px 0; }
.vscroll button, .hscroll button { width: 15px; height: 15px; background: #fff; border: 1px solid #ababab; flex: none; }
.track { flex: 1; background: #dadada; }
.thumb { background: #fff; border: 1px solid #ababab; }
.vscroll .thumb { height: 87%; border-top: 0; }

.sheetbar { flex: none; display: flex; align-items: center; height: 27px; }
.navs { width: 97px; display: flex; gap: 24px; padding-left: 24px; }
.tri { width: 4px; height: 8px; border: 4px solid transparent; }
.left { border-left: 0; border-right-color: #bbb; }
.right { border-right: 0; border-left-color: #bbb; }
.left.dark { border-right-color: #666; }
.right.dark { border-left-color: #666; }
.sheettab { align-self: flex-start; width: 56px; height: 25px; background: #fff; border: 1px solid #999; border-top: 0; border-bottom: 2px solid #217346; padding: 0 2px 2px; }
.sheettab span { flex: 1; height: 21px; background: linear-gradient(#fff, #d3e9b8); color: #217346; font: 700 13px/24px "Open Sans", sans-serif; }
.add { margin-left: 33px; }
.sheetbar .dots { margin-left: auto; margin-right: 14px; }
.hscroll { width: 511px; margin-right: 19px; display: flex; }
.hscroll .track { margin-right: 1px; }
.hscroll .thumb { width: 93%; height: 15px; border-left: 0; }

.status { flex: none; display: flex; align-items: center; height: 22px; background: #f3f3f3; border-top: 1px solid #c6c6c6; padding-right: 7px; }
.rec { margin: 0 auto 0 5px; }
.view { width: 38px; height: 21px; }
.zoombtn { width: 10px; }
.view + .zoombtn { margin-left: 3px; }
input[type="range"] { appearance: none; width: 100px; height: 14px; margin: 0 3px 0 2px; background: linear-gradient(#a6a6a6, #a6a6a6) center / 100% 1px no-repeat; }
input[type="range"]::-webkit-slider-thumb { appearance: none; width: 5px; height: 12px; background: #666; }
.pctval { width: 30px; margin-left: 7px; }
</style>
